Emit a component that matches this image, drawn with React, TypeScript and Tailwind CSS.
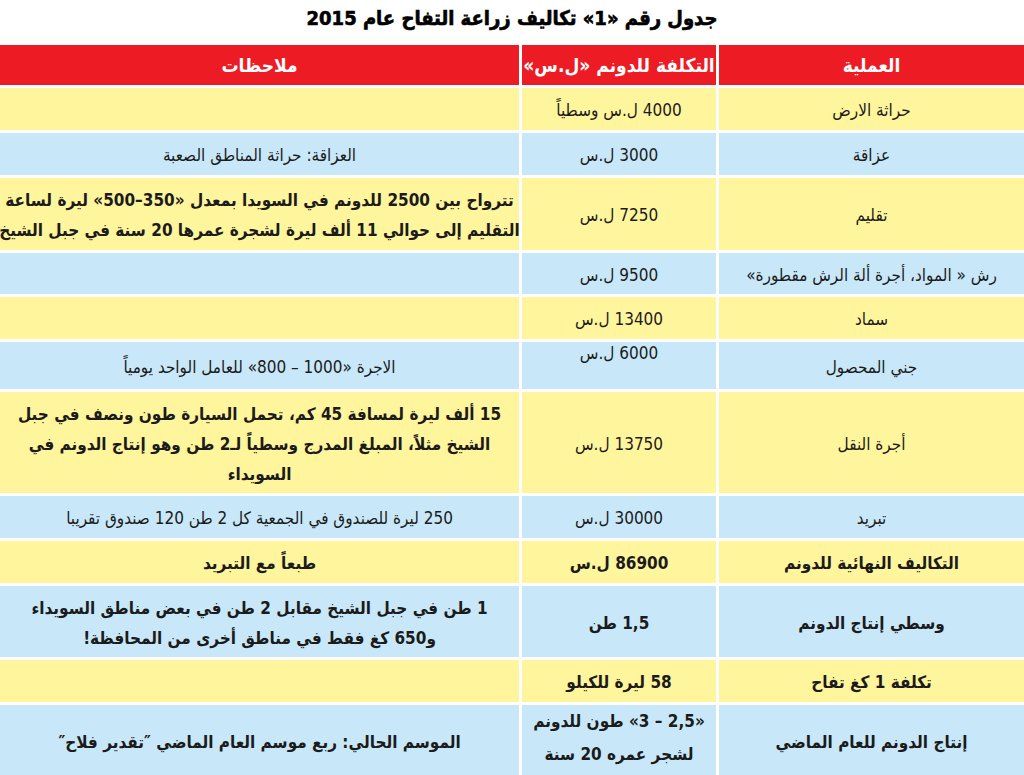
type Row = {
  tone: "y" | "b";
  h: string;
  op: string;
  cost: string[];
  note: string[];
  bold?: boolean;
  noteBold?: boolean;
  costTop?: boolean;
};

const rows: Row[] = [
  { tone: "y", h: "h-[42px]", op: "حراثة الارض", cost: ["4000 ل.س وسطياً"], note: [] },
  { tone: "b", h: "h-[42px]", op: "عزاقة", cost: ["3000 ل.س"], note: ["العزاقة: حراثة المناطق الصعبة"] },
  {
    tone: "y",
    h: "h-[72px]",
    op: "تقليم",
    cost: ["7250 ل.س"],
    note: [
      "تترواح بين 2500 للدونم في السويدا بمعدل «350–500» ليرة لساعة",
      "التقليم إلى حوالي 11 ألف ليرة لشجرة عمرها 20 سنة في جبل الشيخ",
    ],
    noteBold: true,
  },
  { tone: "b", h: "h-[41px]", op: "رش « المواد، أجرة ألة الرش مقطورة»", cost: ["9500 ل.س"], note: [] },
  { tone: "y", h: "h-[42px]", op: "سماد", cost: ["13400 ل.س"], note: [] },
  {
    tone: "b",
    h: "h-[47px]",
    op: "جني المحصول",
    cost: ["6000 ل.س"],
    note: ["الاجرة «1000 – 800» للعامل الواحد يومياً"],
    costTop: true,
  },
  {
    tone: "y",
    h: "h-[101px]",
    op: "أجرة النقل",
    cost: ["13750 ل.س"],
    note: [
      "15 ألف ليرة لمسافة 45 كم، تحمل السيارة طون ونصف في جبل",
      "الشيخ مثلاً، المبلغ المدرج وسطياً لـ2 طن وهو إنتاج الدونم في",
      "السويداء",
    ],
    noteBold: true,
  },
  { tone: "b", h: "h-[42px]", op: "تبريد", cost: ["30000 ل.س"], note: ["250 ليرة للصندوق في الجمعية كل 2 طن 120 صندوق تقريبا"] },
  { tone: "y", h: "h-[42px]", op: "التكاليف النهائية للدونم", cost: ["86900 ل.س"], note: ["طبعاً مع التبريد"], bold: true },
  {
    tone: "b",
    h: "h-[71px]",
    op: "وسطي إنتاج الدونم",
    cost: ["1,5 طن"],
    note: ["1 طن في جبل الشيخ مقابل 2 طن في بعض مناطق السويداء", "و650 كغ فقط في مناطق أخرى من المحافظة!"],
    bold: true,
  },
  { tone: "y", h: "h-[42px]", op: "تكلفة 1 كغ تفاح", cost: ["58 ليرة للكيلو"], note: [], bold: true },
  {
    tone: "b",
    h: "h-[72px]",
    op: "إنتاج الدونم للعام الماضي",
    cost: ["«2,5 – 3» طون للدونم", "لشجر عمره 20 سنة"],
    note: ["الموسم الحالي: ربع موسم العام الماضي ″تقدير فلاح″"],
    bold: true,
  },
];

const Lines = ({ lines, leading }: { lines: string[]; leading: string }) => (
  <div className={`flex flex-col items-center ${leading}`}>
    {lines.map((l, i) => (
      <div key={i} className="whitespace-nowrap">
        {l}
      </div>
    ))}
  </div>
);

export default function App() {
  return (
    <div
      dir="rtl"
      className="w-[1024px] h-[775px] overflow-hidden bg-white text-[#1b1b1b] font-['DejaVu_Sans_Condensed','DejaVu_Sans',sans-serif]"
    >
      <h1 className="h-[45px] flex items-center justify-center pb-[10px] text-[20px] font-bold text-black [-webkit-text-stroke:0.6px_#000]">
        جدول رقم «1» تكاليف زراعة التفاح عام 2015
      </h1>
      <div className="grid grid-cols-[305px_194px_519px] gap-x-[3px] gap-y-[3px]">
        <div className="h-[40px] bg-[#ed1c24] text-white font-bold text-[19px] flex items-center justify-center">العملية</div>
        <div className="h-[40px] bg-[#ed1c24] text-white font-bold text-[19px] flex items-center justify-center">التكلفة للدونم «ل.س»</div>
        <div className="h-[40px] bg-[#ed1c24] text-white font-bold text-[19px] flex items-center justify-center">ملاحظات</div>

        {rows.map((r, i) => {
          const bg = r.tone === "y" ? "bg-[#fff59c]" : "bg-[#c8e8f9]";
          const w = r.bold ? "font-bold" : "font-normal";
          const multi = r.cost.length > 1;
          return [
            <div key={`o${i}`} className={`${r.h} ${bg} ${w} text-[17px] flex items-center justify-center pt-[4px]`}>
              <span className="whitespace-nowrap">{r.op}</span>
            </div>,
            <div
              key={`c${i}`}
              className={`${r.h} ${bg} ${w} text-[17px] flex justify-center ${r.costTop || multi ? "items-start" : "items-center pt-[2px]"}`}
            >
              <Lines lines={r.cost} leading={r.costTop ? "leading-[22px]" : multi ? "leading-[33px]" : "leading-[32px]"} />
            </div>,
            <div
              key={`n${i}`}
              className={`${r.h} ${bg} ${r.bold || r.noteBold ? "font-bold" : "font-normal"} text-[17px] flex items-center justify-center pt-[2px]`}
            >
              <Lines lines={r.note} leading="leading-[30px]" />
            </div>,
          ];
        })}
      </div>
    </div>
  );
}
